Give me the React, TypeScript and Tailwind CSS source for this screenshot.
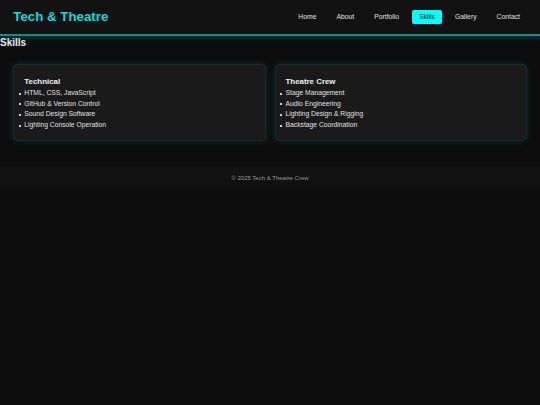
import React from "react";

const links = ["Home", "About", "Portfolio", "Skills", "Gallery", "Contact"];

const skills = [
  {
    title: "Technical",
    items: [
      "HTML, CSS, JavaScript",
      "GitHub & Version Control",
      "Sound Design Software",
      "Lighting Console Operation",
    ],
  },
  {
    title: "Theatre Crew",
    items: [
      "Stage Management",
      "Audio Engineering",
      "Lighting Design & Rigging",
      "Backstage Coordination",
    ],
  },
];

export default function App() {
  return (
    <div
      className="min-h-[405px] bg-[#0d0d0d] text-[#e6e6e6]"
      style={{ fontFamily: '"Liberation Sans", Arial, sans-serif' }}
    >
      {/* Header */}
      <header className="h-[36px] flex items-center justify-between pl-[13.3px] pr-[13px] bg-[#121212] border-b-2 border-[#1d8a8a] shadow-[0_2px_5px_rgba(0,200,200,0.25)]">
        <h1 className="text-[13.3px] font-bold text-[#16d9dc] leading-none">Tech &amp; Theatre</h1>
        <nav className="flex items-center gap-[6px]">
          {links.map((l) => (
            <a
              key={l}
              href="#"
              className={
                l === "Skills"
                  ? "px-[7px] py-[3px] text-[6.8px] leading-[8px] rounded-[2px] bg-[#00ffff] text-[#1a1a1a]"
                  : "px-[7px] py-[3px] text-[6.8px] leading-[8px] text-[#e0e0e0]"
              }
            >
              {l}
            </a>
          ))}
        </nav>
      </header>

      {/* Skills */}
      <section>
        <h2 className="mt-[1px] text-[10px] font-bold leading-[12px] text-[#eeeeee]">Skills</h2>
        <div className="grid grid-cols-2 gap-[9px] px-[13.3px] pt-[15px]">
          {skills.map((s) => (
            <div
              key={s.title}
              className="h-[77px] rounded-[5px] bg-[#1a1a1a] border border-[rgba(0,255,255,0.09)] shadow-[0_0_7px_rgba(0,255,255,0.14)] px-[10px] pt-[11px]"
            >
              <h3 className="text-[7.9px] font-bold leading-[11px] text-[#f0f0f0] mb-[1px]">{s.title}</h3>
              <ul>
                {s.items.map((i) => (
                  <li key={i} className="relative text-[6.75px] leading-[10.7px] text-[#e0e0e0]">
                    <span className="absolute -left-[5.5px] top-[4.5px] w-[2px] h-[2px] bg-[#d0d0d0]" />
                    {i}
                  </li>
                ))}
              </ul>
            </div>
          ))}
        </div>
      </section>

      {/* Footer */}
      <footer className="mt-[25px] h-[24px] bg-[#111111] flex items-center justify-center">
        <p className="text-[6px] text-[#9a9a9a]">© 2025 Tech &amp; Theatre Crew</p>
      </footer>
    </div>
  );
}
